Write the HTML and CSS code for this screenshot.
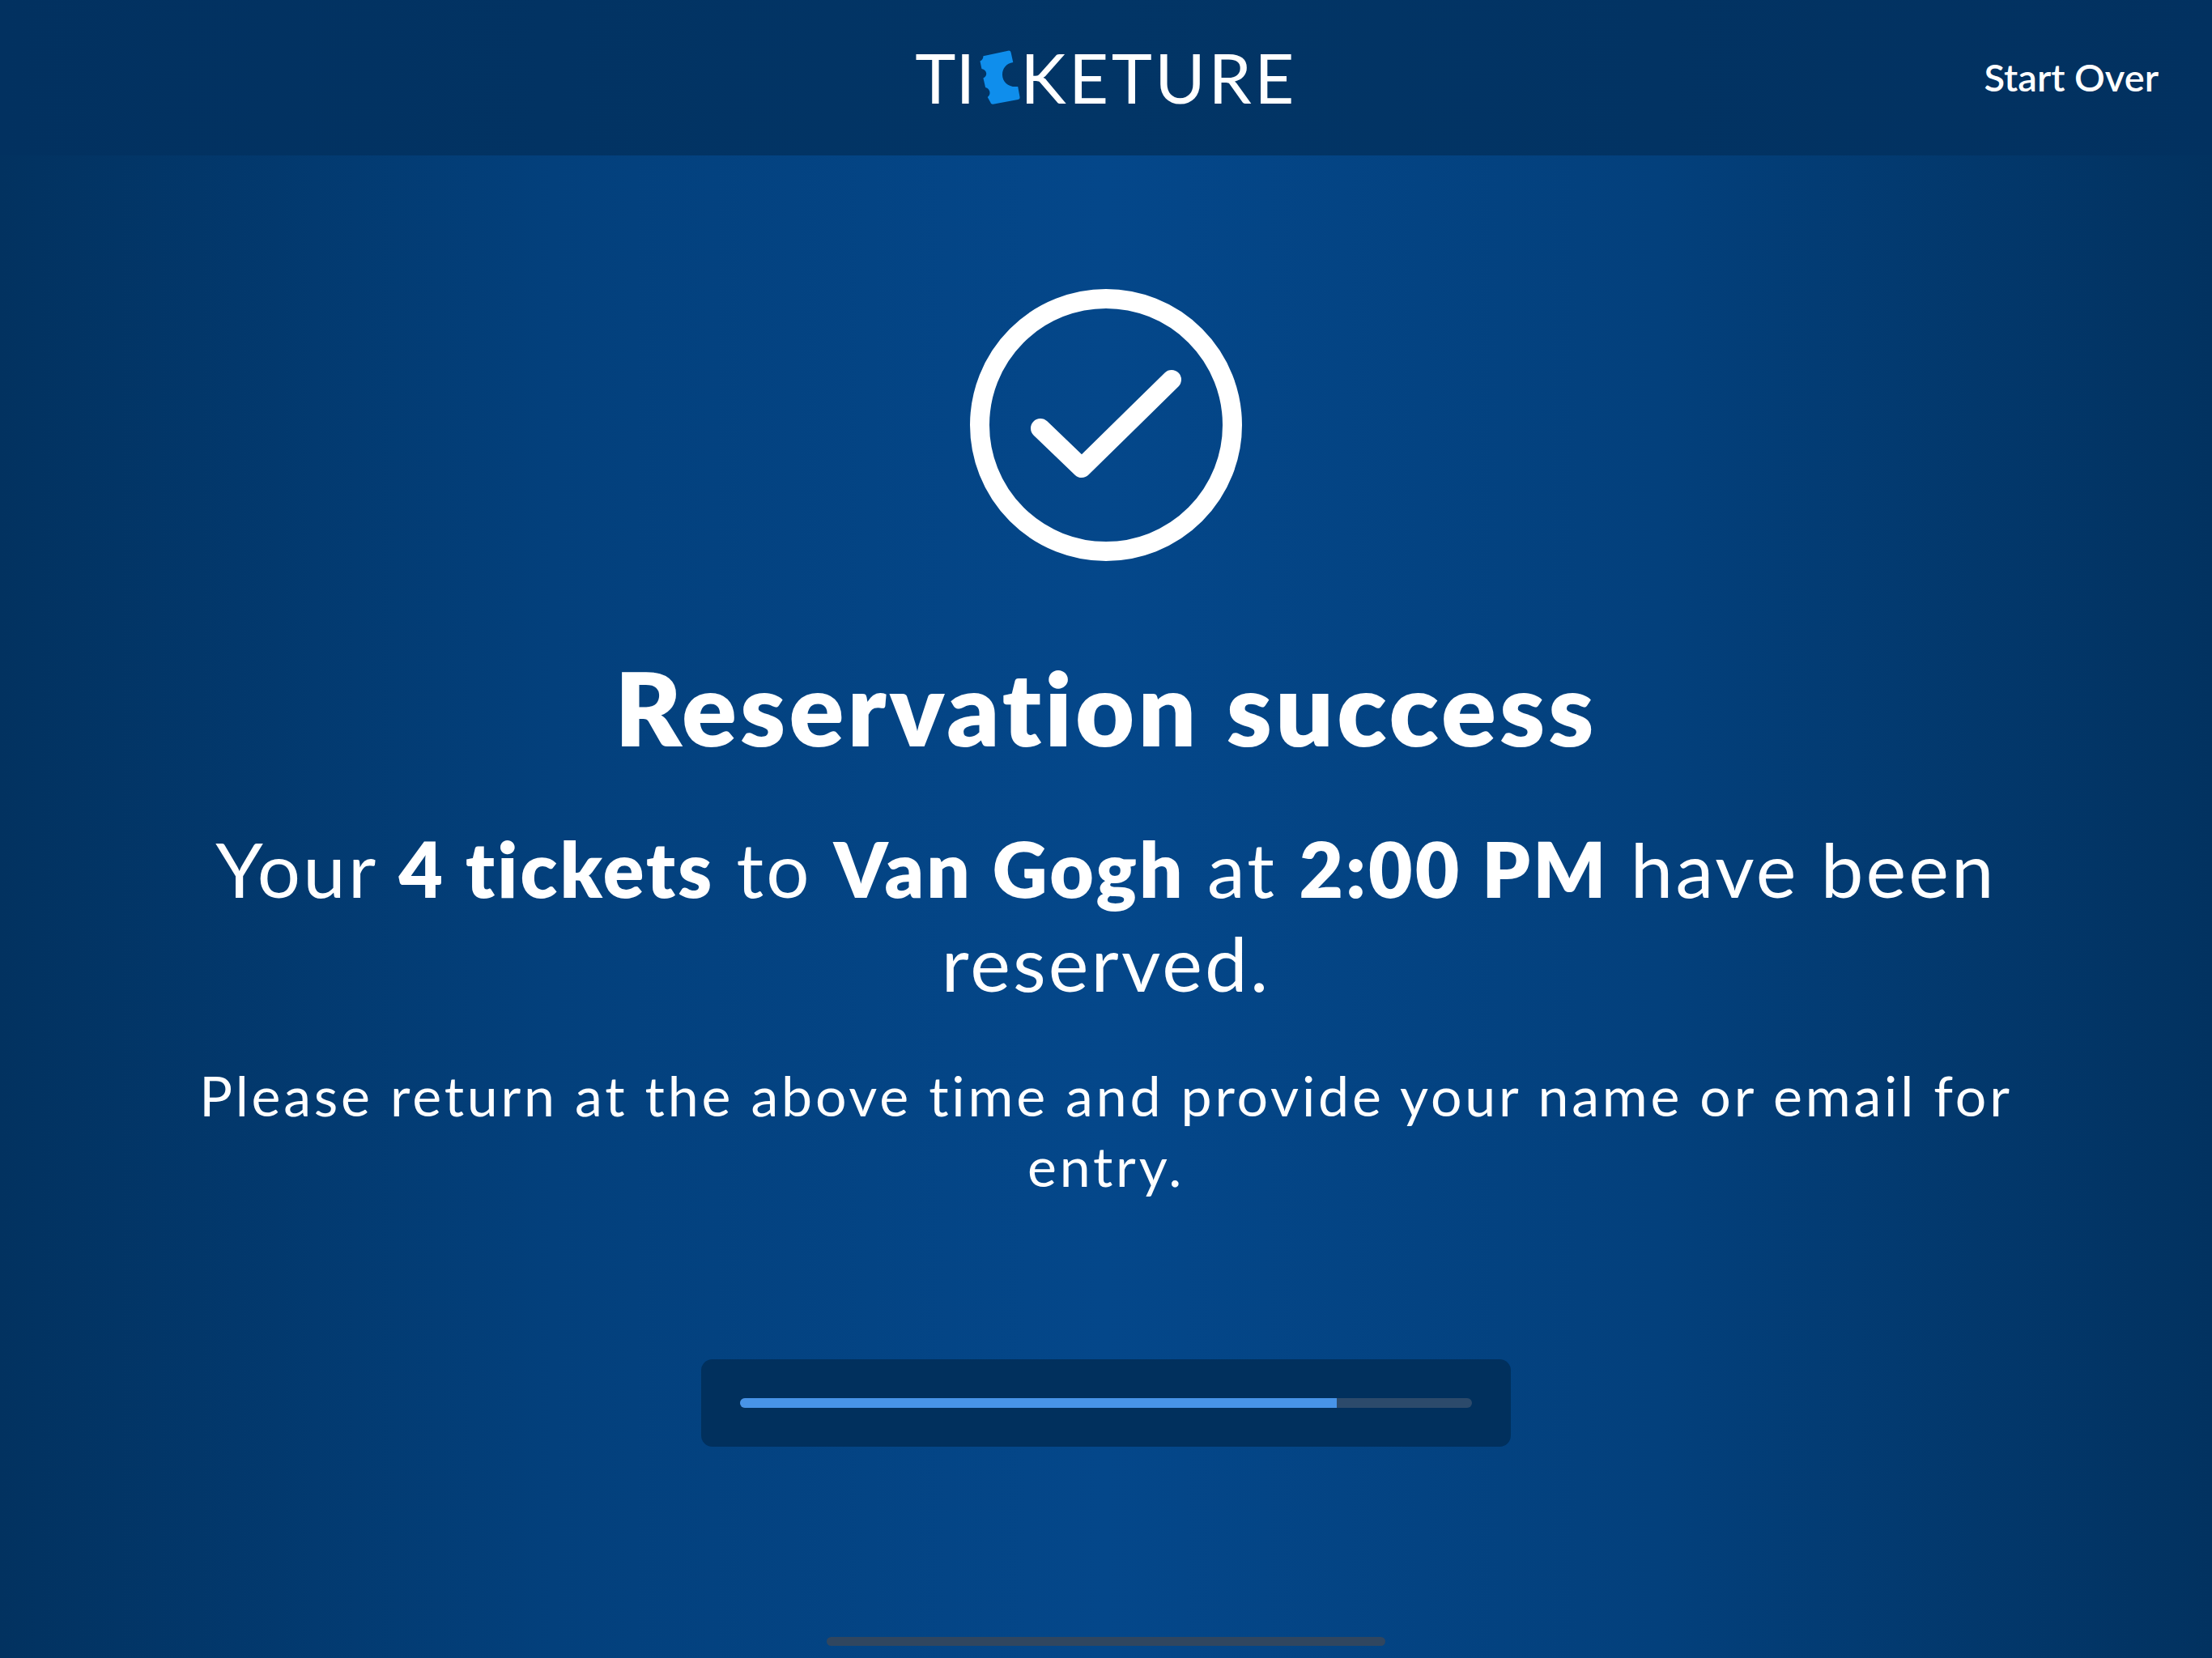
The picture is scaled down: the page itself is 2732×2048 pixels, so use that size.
FILE: index.html
```html
<!DOCTYPE html>
<html lang="en">
<head>
    <meta charset="UTF-8">
    <meta name="viewport" content="width=device-width, initial-scale=1.0">
    <title>Ticketure</title>
    <link rel="stylesheet" href="styles.css">
</head>
<body>

<header class="topbar">
    <div class="logo">
        <span class="logo-start">TI</span>
        <svg class="logo-ticket" viewBox="20 18 156 208">
            <path fill="#0f8eec" d="M36 43 L128 23 Q137 21 139 29 L147 66 C122 70 107 88 107 112 C107 138 128 157 156 157 L165 157 L172 196 Q173 203 165 205 L72 222 Q64 223 62 214 L52 196 C66 186 62 165 44 160 L36 125 C54 116 50 94 30 90 L24 62 C32 58 36 52 36 43 Z"/>
        </svg>
        <span class="logo-end">KETURE</span>
    </div>
    <a class="start-over" href="#">Start Over</a>
</header>

<main class="content">
    <svg class="check" viewBox="0 0 336 336">
        <circle cx="168" cy="168" r="156" fill="none" stroke="#fff" stroke-width="24"/>
        <path d="M87 172 L138 221 L249 112" fill="none" stroke="#fff" stroke-width="24" stroke-linecap="round" stroke-linejoin="round"/>
    </svg>

    <h1>Reservation success</h1>
    <p class="summary">Your <b>4 tickets</b> to <b>Van Gogh</b> at <b>2:00 PM</b> have been<br>reserved.</p>
    <p class="note">Please return at the above time and provide your name or email for<br>entry.</p>

    <div class="progress-card">
        <div class="progress-track">
            <div class="progress-fill"></div>
        </div>
    </div>
</main>

<div class="home-indicator"></div>

</body>
</html>
```

FILE: styles.css
```css
html, body {
    height: 100%;
}

body {
    margin: 0;
    width: 2732px;
    height: 2048px;
    overflow: hidden;
    display: flex;
    flex-direction: column;
    align-items: center;
    color: #fff;
    font-family: Lato, "Open Sans", sans-serif;
    font-variant-ligatures: none;
    background: linear-gradient(90deg, #023260 0%, #03407c 25%, #04478a 50%, #03407c 75%, #023260 100%);
}

/* Top bar */
.topbar {
    width: 100%;
    height: 192px;
    flex: none;
    box-sizing: border-box;
    padding: 0 66px 2px;
    display: grid;
    grid-template-columns: 1fr auto 1fr;
    align-items: center;
    background: linear-gradient(90deg, #023160 0%, #023566 50%, #023160 100%);
}

.logo {
    grid-column: 2;
    display: flex;
    align-items: center;
    font-size: 85px;
    line-height: 1;
}

.logo-start {
    letter-spacing: 0;
}

.logo-end {
    letter-spacing: 3.5px;
}

.logo-ticket {
    width: 52px;
    height: 69px;
    margin: 0 -1px 0 5px;
}

.start-over {
    grid-column: 3;
    justify-self: end;
    color: #fff;
    font-size: 47px;
    font-weight: 600;
    text-decoration: none;
}

/* Main message */
.content {
    width: 2300px;
    display: flex;
    flex-direction: column;
    align-items: center;
    text-align: center;
}

.check {
    width: 336px;
    height: 336px;
    margin-top: 165px;
}

h1 {
    margin: 109px 0 0;
    font-size: 126px;
    line-height: 144px;
    font-weight: 800;
    letter-spacing: 4.2px;
}

.summary {
    margin: 69px 0 0;
    font-size: 94px;
    line-height: 116px;
    letter-spacing: 3.15px;
}

.summary b {
    font-weight: 800;
}

.note {
    margin: 62px 0 0;
    font-size: 68px;
    line-height: 87px;
    letter-spacing: 3.8px;
}

/* Progress */
.progress-card {
    width: 1000px;
    height: 108px;
    margin-top: 196px;
    box-sizing: border-box;
    padding: 48px 48px 0;
    background-color: #01305d;
    border-radius: 14px;
}

.progress-track {
    height: 12px;
    border-radius: 6px;
    overflow: hidden;
    background-color: #2c4a6b;
}

.progress-fill {
    width: 81.5%;
    height: 100%;
    background-color: #4894e8;
}

.home-indicator {
    width: 690px;
    height: 11px;
    margin-top: auto;
    margin-bottom: 15px;
    border-radius: 6px;
    background-color: #30465f;
}
```
